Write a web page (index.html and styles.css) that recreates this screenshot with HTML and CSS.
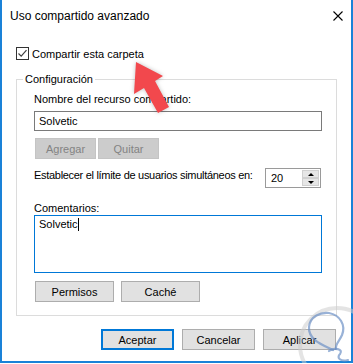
FILE: index.html
```html
<!DOCTYPE html>
<html lang="es">
<head>
<meta charset="utf-8">
<title>Uso compartido avanzado</title>
<link rel="stylesheet" href="styles.css">
</head>
<body>
<div class="window">
  <div class="titlebar">
    <span class="title">Uso compartido avanzado</span>
    <svg class="close" width="10" height="10" viewBox="0 0 10 10"><path d="M0.5 0.5 L9.5 9.5 M9.5 0.5 L0.5 9.5" stroke="#000" stroke-width="1.1" fill="none"/></svg>
  </div>
  <div class="content">
    <div class="share">
      <span class="checkbox"><svg width="11" height="11" viewBox="0 0 11 11"><path d="M1.5 5.5 L4.2 8.2 L9.5 2.2" stroke="#404040" stroke-width="1.2" fill="none"/></svg></span>
      <span>Compartir esta carpeta</span>
    </div>
    <fieldset class="group">
      <legend class="legend">Configuración</legend>
      <div class="inner">
        <div class="lbl">Nombre del recurso compartido:</div>
        <div class="field">Solvetic</div>
        <div class="btnrow">
          <span class="btn disabled w61">Agregar</span>
          <span class="btn disabled w61">Quitar</span>
        </div>
        <div class="limit">
          <span class="lbl tight">Establecer el límite de usuarios simultáneos en:</span>
          <div class="spin">
            <span class="num">20</span>
            <div class="arrows">
              <span class="arr"><span class="tri-up"></span></span>
              <span class="arr"><span class="tri-down"></span></span>
            </div>
          </div>
        </div>
        <div class="lbl comments">Comentarios:</div>
        <div class="textarea">Solvetic<span class="caret"></span></div>
        <div class="btnrow2">
          <span class="btn w79">Permisos</span>
          <span class="btn w79">Caché</span>
        </div>
      </div>
    </fieldset>
    <div class="footer">
      <span class="btn default w73">Aceptar</span>
      <span class="btn w73">Cancelar</span>
      <span class="btn w73">Aplicar</span>
    </div>
  </div>
  <svg class="overlay" width="353" height="364" viewBox="0 0 353 364">
    <g class="mark">
      <circle cx="337" cy="345" r="37" fill="none" stroke="rgba(205,205,205,0.55)" stroke-width="4"/>
      <path d="M333 350 C323 345 308 340 309 327 C310 316 321 312 329 313 C340 315 346 325 342 335 C339 342 335 344 336 349" fill="none" stroke="rgba(110,145,198,0.7)" stroke-width="2.2" stroke-linecap="round"/>
      <path d="M329 351 C334 347 344 349 340 354 C336 358 341 362 348 360" fill="none" stroke="rgba(110,145,198,0.7)" stroke-width="2.2" stroke-linecap="round"/>
    </g>
    <polygon class="arrow" points="136,62 163,76 155,81 169,107 158,113 144,88 134,94" fill="#f2484d"/>
  </svg>
</div>
</body>
</html>
```
FILE: styles.css
```css
html, body {
  margin: 0;
  padding: 0;
  background: #ffffff;
}

body {
  font-family: "Liberation Sans", Arial, sans-serif;
  font-size: 11px;
  color: #000;
}

.window {
  position: relative;
  width: 353px;
  height: 363px;
  box-sizing: border-box;
  border-left: 2px solid #1a82d8;
  border-right: 2px solid #1a82d8;
  border-bottom: 2px solid #1a82d8;
  background: #fff;
}

.titlebar {
  height: 32px;
  display: flex;
  align-items: center;
  justify-content: space-between;
  padding: 0 8px 0 8px;
}

.title {
  font-size: 12px;
  line-height: 14px;
}

.close {
  display: block;
}

.content {
  padding: 0 14px 0 14px;
}

.share {
  margin-top: 15px;
  height: 13px;
  display: flex;
  align-items: center;
  gap: 3px;
  line-height: 14px;
}

.checkbox {
  width: 13px;
  height: 13px;
  box-sizing: border-box;
  border: 1px solid #333;
  display: flex;
  align-items: center;
  justify-content: center;
  background: #fff;
}

.checkbox svg {
  display: block;
}

.group {
  margin: 12px 0 0 0;
  padding: 0;
  border: 1px solid #dcdcdc;
  min-width: 0;
}

.legend {
  padding: 0 2px;
  margin-left: 6px;
  line-height: 14px;
}

.inner {
  padding: 6px 14px 13px 17px;
}

.lbl {
  line-height: 14px;
  white-space: nowrap;
}

.lbl.tight {
  letter-spacing: -0.3px;
}

.field {
  margin-top: 5px;
  height: 20px;
  box-sizing: border-box;
  border: 1px solid #7a7a7a;
  padding-left: 4px;
  line-height: 18px;
}

.btn {
  display: inline-flex;
  align-items: center;
  justify-content: center;
  height: 21px;
  box-sizing: border-box;
  background: #e1e1e1;
  border: 1px solid #adadad;
  line-height: 14px;
}

.btn.disabled {
  background: #cccccc;
  border-color: #c4c4c4;
  color: #838383;
}

.btn.default {
  border: 2px solid #0078d7;
}

.w61 { width: 61px; }
.w79 { width: 79px; }
.w73 { width: 73px; }

.btnrow {
  margin-top: 7px;
  margin-left: 1px;
  display: flex;
  gap: 2px;
}

.limit {
  margin-top: 9px;
  display: flex;
  align-items: flex-start;
  justify-content: space-between;
  padding-right: 1px;
}

.spin {
  width: 56px;
  height: 20px;
  box-sizing: border-box;
  border: 1px solid #9a9a9a;
  display: flex;
}

.num {
  flex: 1;
  padding-left: 5px;
  line-height: 18px;
}

.arrows {
  width: 17px;
  padding: 1px 1px 1px 0;
  display: flex;
  flex-direction: column;
}

.arr {
  flex: 1;
  display: flex;
  align-items: center;
  justify-content: center;
  background: #e6e6e6;
  border: 1px solid #d0d0d0;
}

.tri-up {
  width: 0;
  height: 0;
  border-left: 3px solid transparent;
  border-right: 3px solid transparent;
  border-bottom: 3px solid #000;
}

.tri-down {
  width: 0;
  height: 0;
  border-left: 3px solid transparent;
  border-right: 3px solid transparent;
  border-top: 3px solid #000;
}

.comments {
  margin-top: 13px;
}

.textarea {
  height: 58px;
  box-sizing: border-box;
  border: 1px solid #0078d7;
  padding: 1px 4px 0 4px;
  line-height: 14px;
  display: flex;
  align-items: flex-start;
}

.caret {
  display: inline-block;
  width: 1px;
  height: 13px;
  margin-top: 1px;
  background: #000;
}

.btnrow2 {
  margin-top: 8px;
  margin-left: 1px;
  display: flex;
  gap: 7px;
}

.footer {
  margin-top: 13px;
  margin-right: 1px;
  display: flex;
  justify-content: flex-end;
  gap: 8px;
}

.overlay {
  position: absolute;
  left: -2px;
  top: 0;
  pointer-events: none;
}

.arrow {
  filter: drop-shadow(0 0 2px rgba(0, 0, 0, 0.25));
}
```
